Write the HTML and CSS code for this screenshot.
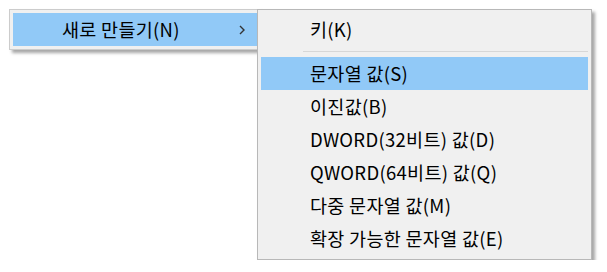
FILE: index.html
```html
<!doctype html>
<html>
<head>
<meta charset="utf-8">
<link rel="stylesheet" href="styles.css">
</head>
<body>
	<div class="desktop">
		<div class="menu">
			<div class="item active">
				<span class="label">새로 만들기(N)</span>
				<svg class="arrow" width="6" height="10" viewBox="0 0 6 10"><polyline points="1,1 5,5 1,9" fill="none" stroke="#333" stroke-width="1.4"/></svg>
			</div>
		</div>
		<div class="menu submenu">
			<div class="item"><span class="label">키(K)</span></div>
			<div class="separator"></div>
			<div class="item active"><span class="label">문자열 값(S)</span></div>
			<div class="item"><span class="label">이진값(B)</span></div>
			<div class="item"><span class="label">DWORD(32비트) 값(D)</span></div>
			<div class="item"><span class="label">QWORD(64비트) 값(Q)</span></div>
			<div class="item"><span class="label">다중 문자열 값(M)</span></div>
			<div class="item"><span class="label">확장 가능한 문자열 값(E)</span></div>
		</div>
	</div>
</body>
</html>
```

FILE: styles.css
```css
html, body {
	margin: 0;
	background: #fff;
	font-family: "Noto Sans CJK KR", "Noto Sans", sans-serif;
	font-size: 18.5px;
	letter-spacing: 0.3px;
	color: #000;
}

.desktop {
	display: flex;
	align-items: flex-start;
	padding: 9px 0 0 9px;
}

.menu {
	background: #f0f0f0;
	border: 1px solid #cccccc;
	padding: 3px;
	box-shadow: 3px 3px 3px rgba(0, 0, 0, 0.35);
}

.menu > .item {
	width: 244px;
}

.submenu {
	position: relative;
	margin-left: -4px;
	width: 327px;
	padding-bottom: 4px;
	border-color: #b8b8b8;
}

.submenu > .item {
	width: auto;
}

.item {
	display: flex;
	align-items: center;
	justify-content: space-between;
	height: 33px;
	padding-left: 49px;
	padding-right: 12px;
	box-sizing: border-box;
	white-space: nowrap;
}

.item.active {
	background: #91c9f7;
}

.label {
	line-height: 33px;
}

.separator {
	height: 1px;
	margin: 5px 0 5px 42px;
	background: #d7d7d7;
}
```
